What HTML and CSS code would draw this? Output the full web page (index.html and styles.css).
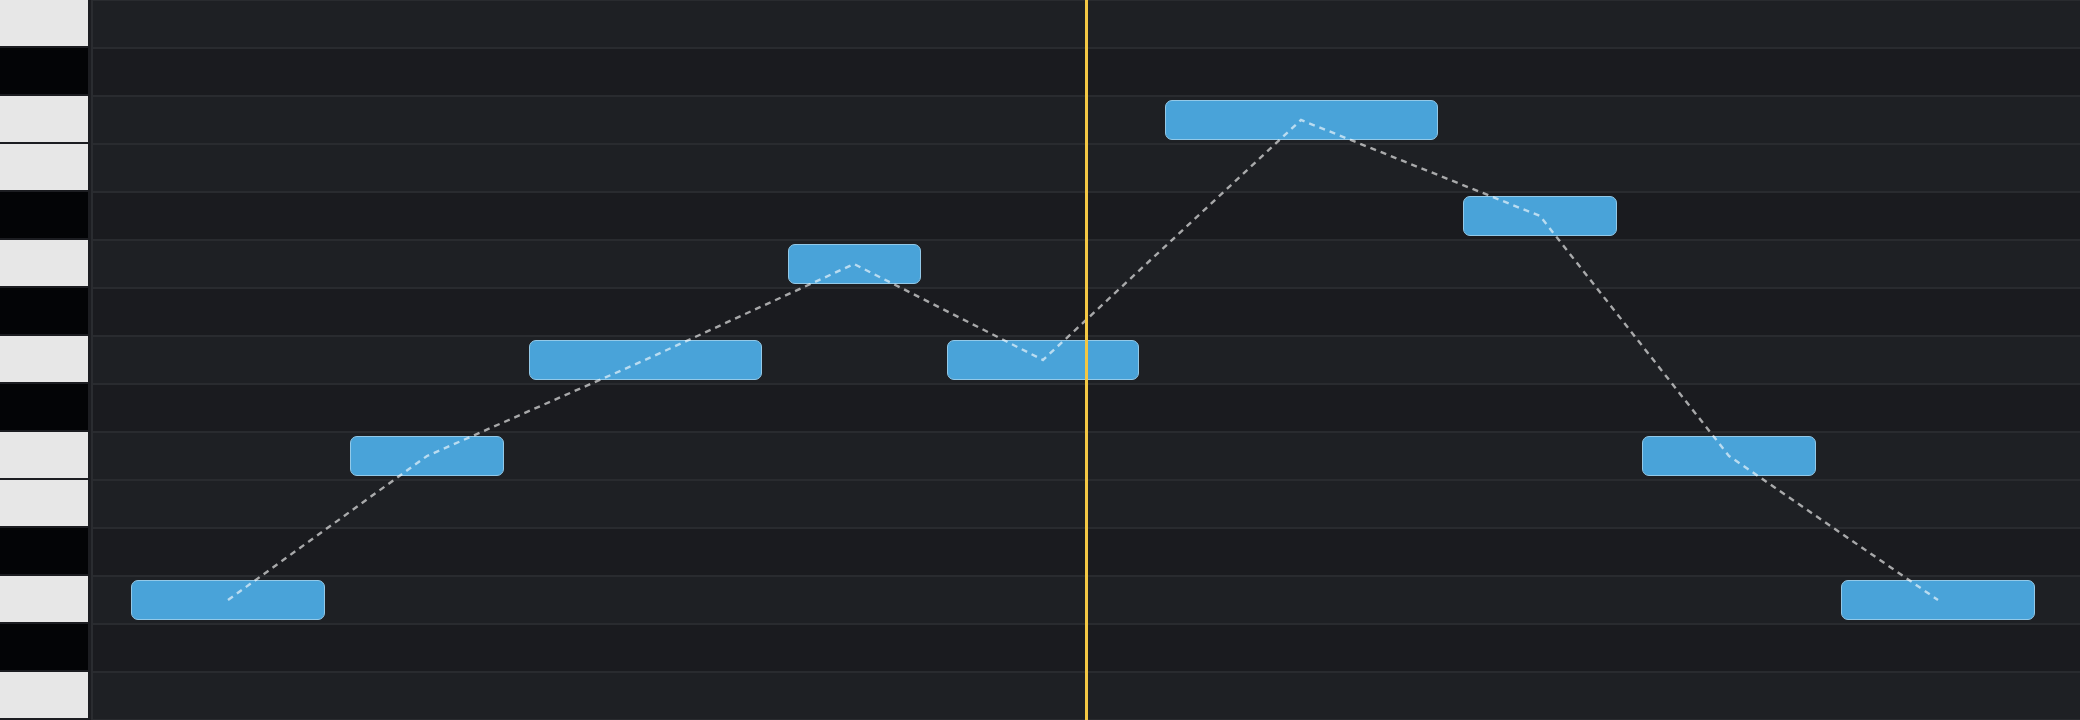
FILE: index.html
```html
<!DOCTYPE html>
<html lang="en">
<head>
<meta charset="utf-8">
<title>Piano Roll</title>
<link rel="stylesheet" href="styles.css">
</head>
<body>
<div class="roll">
  <div class="keys">
    <div class="key white"></div>
    <div class="key black"></div>
    <div class="key white"></div>
    <div class="key white"></div>
    <div class="key black"></div>
    <div class="key white"></div>
    <div class="key black"></div>
    <div class="key white"></div>
    <div class="key black"></div>
    <div class="key white"></div>
    <div class="key white"></div>
    <div class="key black"></div>
    <div class="key white"></div>
    <div class="key black"></div>
    <div class="key white"></div>
  </div>
  <div class="lanes">
    <div class="lane natural"></div>
    <div class="lane sharp"></div>
    <div class="lane natural"></div>
    <div class="lane natural"></div>
    <div class="lane sharp"></div>
    <div class="lane natural"></div>
    <div class="lane sharp"></div>
    <div class="lane natural"></div>
    <div class="lane sharp"></div>
    <div class="lane natural"></div>
    <div class="lane natural"></div>
    <div class="lane sharp"></div>
    <div class="lane natural"></div>
    <div class="lane sharp"></div>
    <div class="lane natural"></div>
  </div>

  <div class="note" style="left:131px;top:580px;width:194px"></div>
  <div class="note" style="left:350px;top:436px;width:154px"></div>
  <div class="note" style="left:529px;top:340px;width:233px"></div>
  <div class="note" style="left:788px;top:244px;width:133px"></div>
  <div class="note" style="left:947px;top:340px;width:192px"></div>
  <div class="note" style="left:1165px;top:100px;width:273px"></div>
  <div class="note" style="left:1463px;top:196px;width:154px"></div>
  <div class="note" style="left:1642px;top:436px;width:174px"></div>
  <div class="note" style="left:1841px;top:580px;width:194px"></div>

  <svg class="contour" width="2080" height="720" viewBox="0 0 2080 720">
    <polyline points="228,600 427,456 645,360 854,264 1043,360 1301,120 1540,216 1729,456 1938,600"/>
  </svg>

  <div class="playhead"></div>
</div>
</body>
</html>
```

FILE: styles.css
```css
* {
  box-sizing: border-box;
}

html, body {
  margin: 0;
  padding: 0;
  background: #1c1d21;
  overflow: hidden;
}

.roll {
  position: relative;
  display: flex;
  width: 2080px;
  height: 720px;
}

/* keyboard column */
.keys {
  width: 88px;
  flex: none;
  display: flex;
  flex-direction: column;
  gap: 2px;
  margin-right: 3px;
}

.key {
  height: 46px;
  flex: none;
}

.key.white {
  background: #e7e7e7;
}

.key.black {
  background: #030406;
}

/* note lanes */
.lanes {
  flex: 1;
  display: flex;
  flex-direction: column;
  border-left: 2px solid #2a2c30;
}

.lane {
  height: 48px;
  flex: none;
  border-top: 1px solid #292b2f;
  border-bottom: 1px solid #292b2f;
}

.lane.natural {
  background: #1e2024;
}

.lane.sharp {
  background: #1a1b1f;
}

/* notes */
.note {
  position: absolute;
  height: 40px;
  background: #49a3d9;
  border: 1.5px solid #93c9e8;
  border-radius: 7px;
}

.contour {
  position: absolute;
  left: 0;
  top: 0;
  pointer-events: none;
}

.contour polyline {
  fill: none;
  stroke: rgba(255, 255, 255, 0.62);
  stroke-width: 2.4;
  stroke-dasharray: 6 5;
}

.playhead {
  position: absolute;
  left: 1085px;
  top: 0;
  width: 3px;
  height: 720px;
  background: #f3c744;
}
```
